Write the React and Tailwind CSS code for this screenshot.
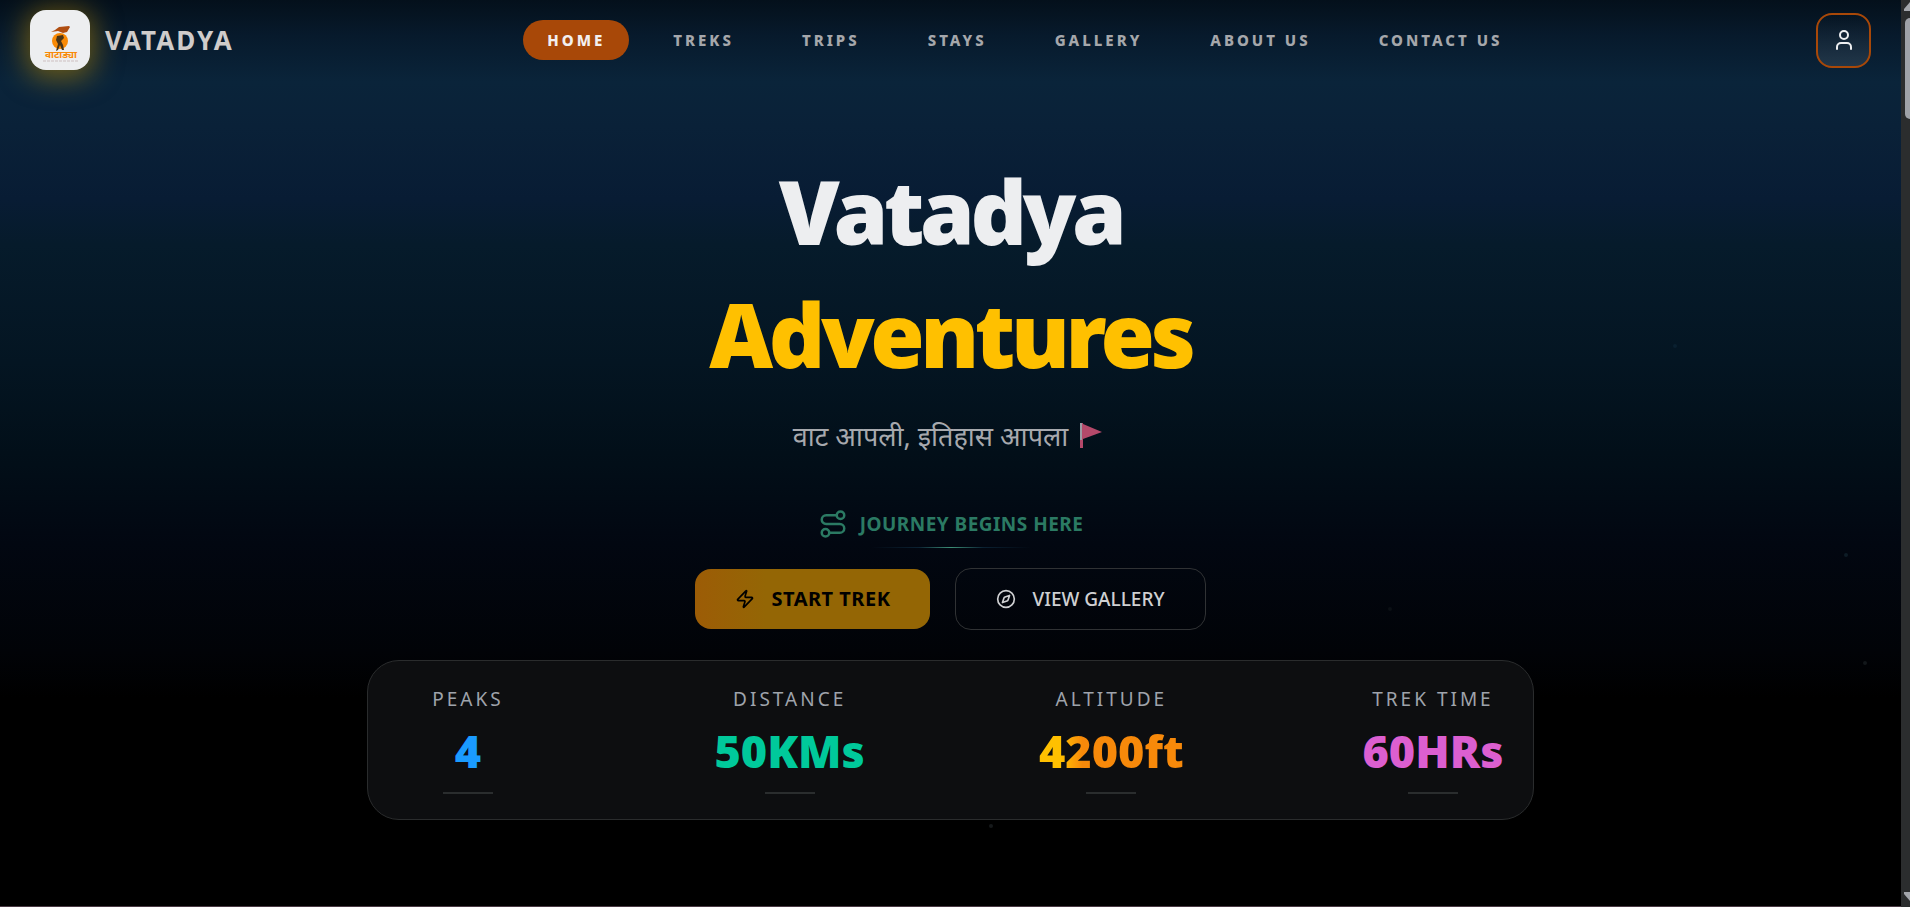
import React from 'react';
import { Compass, Route, User, Zap } from 'lucide-react';

const navItems = ['Home', 'Treks', 'Trips', 'Stays', 'Gallery', 'About Us', 'Contact Us'];

const stats = [
  { label: 'Peaks', value: '4', color: 'text-[#1a9bff]' },
  { label: 'Distance', value: '50KMs', color: 'text-[#00c99b]' },
  { label: 'Altitude', value: '4200ft', color: 'bg-gradient-to-r from-[#ffc000] from-15% to-[#f7890a] to-30% bg-clip-text text-transparent' },
  { label: 'Trek Time', value: '60HRs', color: 'text-[#dc5fd0]' },
];

const Logo = () => (
  <svg viewBox="0 0 60 60" className="h-15 w-15" aria-hidden="true">
    <path d="M21 22 L25 20 L29 17 L39 16 L40 17 L37 22 L33 23 L28 21 Z" fill="#b04e12" />
    <circle cx="30" cy="31" r="8" fill="#f98a06" />
    <path d="M27 26 L33 25 L34 28 L31 31 L33 35 L34 40 L32 40 L30 35 L28 40 L26 41 L28 34 L26 30 Z" fill="#4a3518" />
    <text x="31" y="48" textAnchor="middle" fontSize="10" fontWeight="700" fill="#f98a06">वाटाड्या</text>
    <path d="M13 51 H48" stroke="#cdbfc0" strokeDasharray="3 1" />
  </svg>
);

const Navbar = () => (
  <header className="flex items-center justify-between px-[30px] pt-[10px]">
    <a href="#home" className="flex items-center gap-[15px]">
      <span className="rounded-2xl bg-[#edeef0] shadow-[0_4px_28px_4px_rgba(190,140,0,0.55)]">
        <Logo />
      </span>
      <span className="text-[26px] font-bold tracking-[2px] text-[#cfcccb]">VATADYA</span>
    </a>
    <nav className="flex items-center gap-5">
      {navItems.map((item, i) => (
        <a
          key={item}
          href={`#${item.toLowerCase().replace(' ', '-')}`}
          className={`rounded-full px-6 py-2 text-[15px] leading-6 font-extrabold uppercase tracking-[3px] ${i === 0 ? 'bg-[#a84808] text-[#f3efee]' : 'text-[#a5a7ab]'}`}
        >
          {item}
        </a>
      ))}
    </nav>
    <button
      aria-label="Account"
      className="flex h-[55px] w-[55px] items-center justify-center rounded-2xl border-2 border-[#a84808] bg-gradient-to-b from-transparent to-white/10 text-[#edeef0]"
    >
      <User size={24} />
    </button>
  </header>
);

const Flag = () => (
  <svg viewBox="0 0 36 36" className="h-9 w-9" aria-hidden="true">
    <path d="M11 6 L30 14 L11 21 Z" fill="#b4496a" />
    <path d="M8 5 h3 v25 h-3 Z" fill="#b4496a" />
    <path d="M8 5 h2 v17 h-2 Z" fill="#9b9aa3" />
  </svg>
);

// faint stars scattered over the sky
const Stars = () => (
  <div className="pointer-events-none absolute inset-0" aria-hidden="true">
    <span className="absolute top-[91%] left-[52%] h-1 w-1 rounded-full bg-[#16191b]" />
    <span className="absolute top-[61%] left-[97%] h-1 w-1 rounded-full bg-[#0d1c26]" />
    <span className="absolute top-[73%] left-[98%] h-1 w-1 rounded-full bg-[#12171a]" />
    <span className="absolute top-[67%] left-[73%] h-1 w-1 rounded-full bg-[#0b1015]" />
    <span className="absolute top-[38%] left-[88%] h-1 w-1 rounded-full bg-[#0a2030]" />
  </div>
);

const Hero = () => (
  <main className="flex flex-col items-center">
    <h1 className="mt-20 text-center text-[88px] leading-[123px] font-black tracking-tighter">
      <span className="block text-[#edeef0]">Vatadya</span>
      <span className="block text-[#ffc000]">Adventures</span>
    </h1>
    <p className="mt-5 flex items-center gap-1 text-[27px] leading-10 text-[#a7a9ae]">
      वाट आपली, इतिहास आपला
      <Flag />
    </p>
    <p className="mt-[53px] flex items-center gap-3 text-[19px] leading-7 font-bold tracking-wide text-[#2b7a63]">
      <Route size={30} />
      JOURNEY BEGINS HERE
    </p>
    <div className="mt-2 h-px w-40 bg-[linear-gradient(to_right,transparent,#0b2233_30%,#3d8f76_50%,#0b2233_70%,transparent)]" />
    <div className="mt-5 flex items-center gap-[25px]">
      <button className="flex items-center gap-4 rounded-2xl bg-gradient-to-r from-[#9c5c06] to-[#946605] to-30% px-10 py-4 text-xl leading-7 font-bold tracking-wide text-black">
        <Zap size={20} />
        START TREK
      </button>
      <button className="flex items-center gap-4 rounded-2xl border border-[#303234] px-10 py-4 text-[19px] leading-7 font-medium text-[#cfd0d2]">
        <Compass size={20} />
        VIEW GALLERY
      </button>
    </div>
    <section className="mt-[30px] flex w-full max-w-[1167px] justify-between rounded-[32px] border border-[#2a2c2d] bg-[#0d0e10] px-8 pt-6 pb-[25px]">
      {stats.map((stat) => (
        <div key={stat.label} className="flex w-34 flex-col items-center whitespace-nowrap">
          <span className="text-[19px] leading-7 uppercase tracking-[3px] text-[#9fa3ab]">{stat.label}</span>
          <span className={`mt-3 text-[45px] leading-[52px] font-black ${stat.color}`}>{stat.value}</span>
          <span className="mt-[15px] h-0.5 w-[50px] bg-[#2a2d2e]" />
        </div>
      ))}
    </section>
  </main>
);

const ScrollRail = () => (
  <div className="flex w-[9px] flex-col items-end overflow-hidden bg-[#2b2d2e]">
    <svg viewBox="0 0 6 18" className="h-[18px] w-[6px]">
      <path d="M6 2 L0 9 V11 H6 Z" fill="#a3a6ac" />
    </svg>
    <div className="h-[101px] w-[5px] rounded-l-md bg-[#9fa2a8]" />
    <svg viewBox="0 0 6 18" className="mt-auto h-[18px] w-[6px]">
      <path d="M0 3 H6 V12 L0 5 Z" fill="#a3a6ac" />
    </svg>
  </div>
);

const App = () => (
  <div className="flex min-h-screen font-['Noto_Sans',sans-serif]">
    <div className="relative flex-1 border-b border-[#4a3a44] bg-[linear-gradient(to_bottom,#04101b_0%,#071a2c_4%,#0a243a_9%,#0a2138_14%,#081c34_22%,#061b2b_27%,#041522_40%,#020f19_50%,#020711_60%,#010307_72%,#000_77%)]">
      <Stars />
      <Navbar />
      <Hero />
    </div>
    <ScrollRail />
  </div>
);

export default App;
